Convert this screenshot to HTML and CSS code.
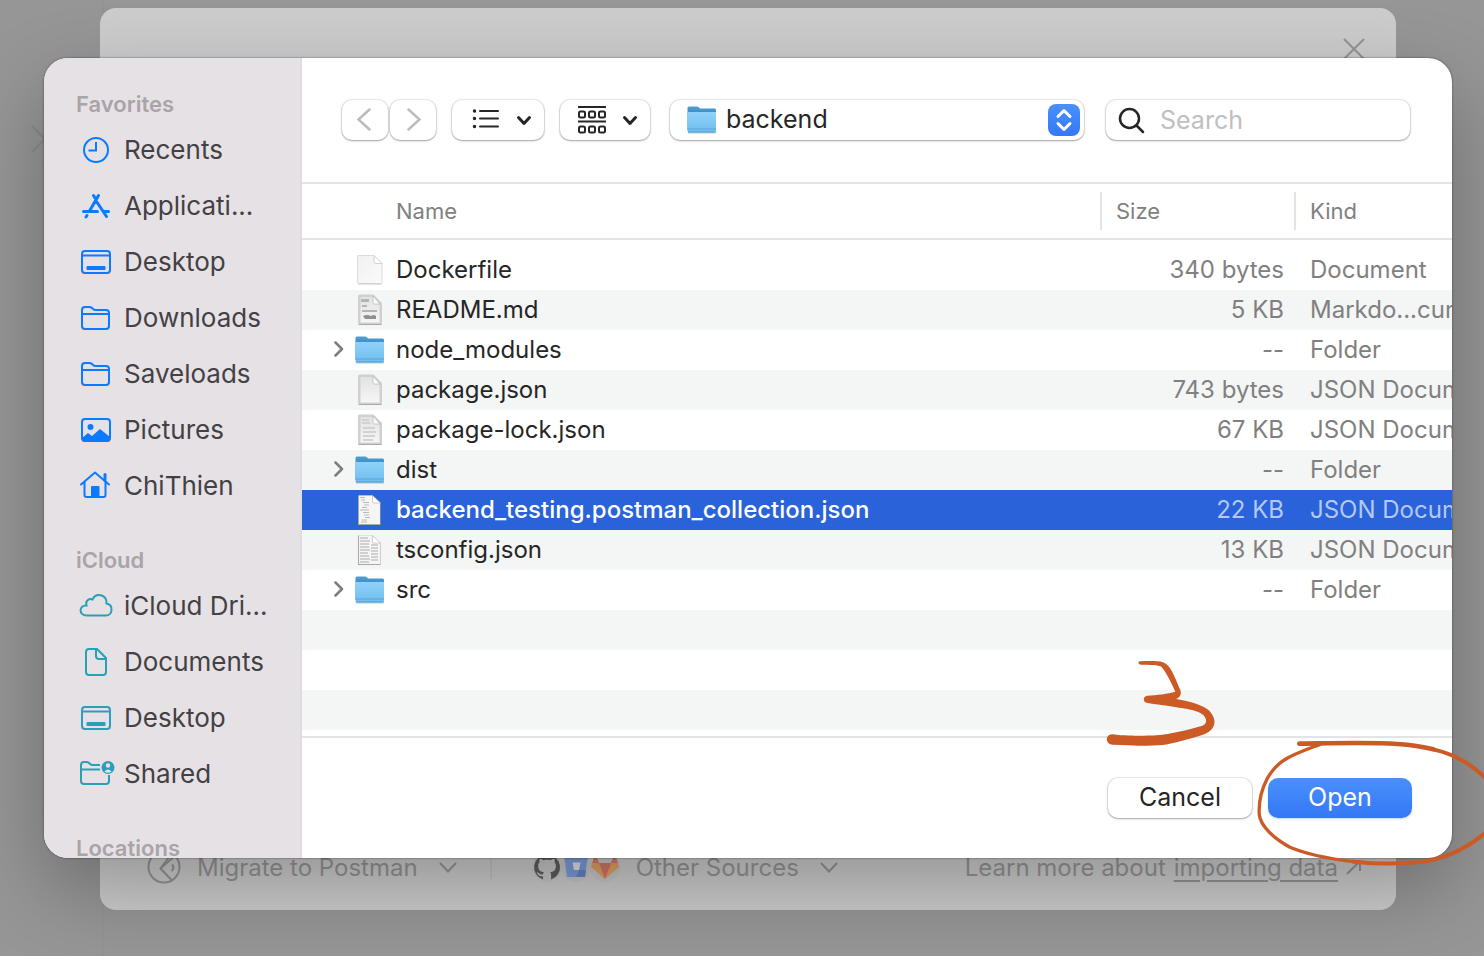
FILE: index.html
```html
<!DOCTYPE html>
<html lang="en">
<head>
<meta charset="utf-8">
<meta name="viewport" content="width=device-width, initial-scale=1">
<title>Open file</title>
<link rel="stylesheet" href="styles.css">
</head>
<body>
<svg class="defs" width="0" height="0" aria-hidden="true">
  <defs>
    <linearGradient id="folder-front" x1="0" y1="0" x2="0" y2="1"><stop offset="0" stop-color="#8fd2fa"/><stop offset="1" stop-color="#70bdee"/></linearGradient>
    <linearGradient id="folder-back" x1="0" y1="0" x2="0" y2="1"><stop offset="0" stop-color="#4f9fd2"/><stop offset=".4" stop-color="#3585c2"/></linearGradient>
    <linearGradient id="paper" x1="0" y1="0" x2="1" y2="1"><stop offset="0" stop-color="#f1f1f1"/><stop offset="1" stop-color="#fafafa"/></linearGradient>
    <linearGradient id="paper-grey" x1="0" y1="0" x2="0" y2="1"><stop offset="0" stop-color="#e2e2e2"/><stop offset="1" stop-color="#f6f6f6"/></linearGradient>
    <symbol id="folder" viewBox="0 0 32 30">
      <path d="M2 27.500h28v1H2z" fill="#000" opacity=".22"/>
      <path d="M1.500 3Q1.500 1.500 3 1.500h8q1 0 2 1l1 1h14.500Q30 3.500 30 5v20H1.500z" fill="url(#folder-back)"/>
      <path d="M1.500 7h28.500v19q0 1.500-1.500 1.500H3q-1.500 0-1.500-1.500z" fill="url(#folder-front)"/>
      <path d="M1.500 24h28.500" stroke="#57a5d8" stroke-width="1"/>
      <path d="M2 27h27.500" stroke="#4b9bd0" stroke-width="1"/>
    </symbol>
    <symbol id="doc" viewBox="0 0 32 32">
      <path d="M3.500 2.500Q3.500 1.500 4.500 1.500h15L28 9.500v18.500q0 1.500-1.500 1.500H5q-1.500 0-1.500-1.500z" fill="url(#paper)" stroke="#dcdcdc"/>
      <path d="M20 1.500v6q0 2 2 2h6z" fill="#fff" stroke="#d2d2d2"/>
      <path d="M4 30h23.500" stroke="#c9c9c9"/>
    </symbol>
    <symbol id="doc-thumb" viewBox="0 0 32 32">
      <path d="M4 2Q4 .5 5.500 .5h14L28 9v20.500q0 1.500-1.500 1.500H5.500Q4 31 4 29.500z" fill="#d0d0d0"/>
      <path d="M6.500 3h12.500l6.500 7.500v18H6.500z" fill="url(#paper-grey)"/>
      <path d="M19 2v6.500q0 1.500 1.500 1.500H26z" fill="#fafafa" stroke="#bdbdbd" stroke-width=".8"/>
      <path d="M5 30.500h22.500" stroke="#aaa"/>
    </symbol>
    <symbol id="doc-code" viewBox="0 0 32 32">
      <path d="M4 1.500h14.500L26.500 9v22H4z" fill="#a8a8a8"/>
      <path d="M5 1.500h13l8 7.500v21H5z" fill="#f5f5f5"/>
      <path d="M18.500 1.500V8q0 1 1 1h7z" fill="#fff" stroke="#bdbdbd" stroke-width=".7"/>
    </symbol>
    <symbol id="chev-down" viewBox="0 0 16 16"><path d="M2.500 5.500 8 11.500l5.500-6" fill="none" stroke="currentColor" stroke-width="3" stroke-linecap="round" stroke-linejoin="round"/></symbol>
    <symbol id="chev-thin" viewBox="0 0 20 20"><path d="M2 6l8 8.500L18 6" fill="none" stroke="currentColor" stroke-width="2"/></symbol>
    <symbol id="disclosure" viewBox="1 0 10 18"><path d="M2.500 2.500 9 9l-6.500 6.500" fill="none" stroke="#7d7d7d" stroke-width="2.500" stroke-linecap="round" stroke-linejoin="round"/></symbol>
    <symbol id="side-desktop" viewBox="0 0 36 32"><g fill="none" stroke="currentColor" stroke-width="2"><rect x="4" y="5" width="28" height="22" rx="3"/><path d="M4 9.500h28"/></g><rect x="8.500" y="20" width="19" height="4" rx="1" fill="currentColor"/></symbol>
    <symbol id="side-folder" viewBox="0 0 36 32"><path d="M4 24V8q0-3 3-3h4q2 0 3 1l1 1q1 1 3 1h10q3 0 3 3v13q0 3-3 3H7q-3 0-3-3zM4 12h27" fill="none" stroke="currentColor" stroke-width="2"/></symbol>
  </defs>
</svg>

<div class="stage">
  <div class="page-rule"></div>
  <svg class="page-chevron" width="16" height="28" viewBox="0 0 16 28" aria-hidden="true"><path d="M1 1l13 13L1 27" fill="none" stroke="currentColor" stroke-width="2"/></svg>

  <section class="import-modal" aria-label="Import">
    <button class="close" type="button" aria-label="Close">
      <svg width="24" height="24" viewBox="0 0 24 24" aria-hidden="true"><path d="M2 2l20 20M22 2L2 22" stroke="currentColor" stroke-width="2"/></svg>
    </button>
    <div class="import-footer">
      <button class="source" type="button">
        <svg width="34" height="34" viewBox="0 0 34 34" fill="none" stroke="currentColor" stroke-width="2" aria-hidden="true"><circle cx="17" cy="17" r="15.500"/><path d="M26 7.500L13.500 18.500l11 11.500"/><path d="M13.500 18.500L22 7"/><path d="M25 14.500q3 3.500-.5 6.500"/></svg>
        <span>Migrate to Postman</span>
        <svg width="20" height="20" aria-hidden="true"><use href="#chev-thin"/></svg>
      </button>
      <span class="divider"></span>
      <button class="source" type="button">
        <span class="logos">
          <svg width="30" height="30" viewBox="0 0 30 30" aria-hidden="true"><circle cx="15" cy="15" r="15" fill="#c6c6c6"/><path fill="#5e5e5e" d="M15 2.500a12.800 12.800 0 0 0-4 25v-3.300c-4 .8-4.500-2.200-5.800-2.800-.8-.5-.7-1 .3-1 1.800 0 2.400 3 5.500 1.800.1-1 .5-1.600 1-2-3.200-.4-5.800-1.800-5.800-6.300 0-1.600.5-2.600 1.400-3.600-.3-1-.3-2.300.2-3.500 1.500 0 2.700.8 3.800 1.500 2.200-.6 4.700-.6 6.900 0 1-.7 2.200-1.400 3.800-1.500.5 1.200.5 2.500.2 3.500.9 1 1.400 2 1.400 3.600 0 4.500-2.600 5.900-5.800 6.300.6.500 1 1.400 1 2.800v4.500a12.800 12.800 0 0 0-4.100-25z"/></svg>
          <svg width="30" height="30" viewBox="0 0 30 30" aria-hidden="true"><circle cx="15" cy="15" r="15" fill="#c6c6c6"/><path d="M3 3h24l-3 22H6z" fill="#7c9cda"/><path d="M11.500 10.500h8l-1.500 7.500h-5z" fill="#dfe2e8"/><path d="M18 18h7l-1 7h-9z" fill="#6984c4"/></svg>
          <svg width="30" height="30" viewBox="0 0 30 30" aria-hidden="true"><circle cx="15" cy="15" r="15" fill="#c6c6c6"/><path d="M5 1l4 10h12l4-10 4 14-14 12L1 15z" fill="#e2a064"/><path d="M5 1l4 10H2.500zM25 1l-4 10h6.500zM9 11h12l-6 16z" fill="#d0776a"/></svg>
        </span>
        <span>Other Sources</span>
        <svg width="20" height="20" aria-hidden="true"><use href="#chev-thin"/></svg>
      </button>
      <p class="learn">Learn more about <a href="#import">importing data</a>
        <svg width="16" height="16" viewBox="0 0 16 16" fill="none" stroke="currentColor" stroke-width="2" aria-hidden="true"><path d="M1 15L14 2M4 2h10v10"/></svg>
      </p>
    </div>
  </section>

  <section class="dialog" role="dialog" aria-label="Open">
    <nav class="sidebar" aria-label="Locations">
      <h2>Favorites</h2>
      <ul>
        <li><a href="#recents"><svg viewBox="0 0 36 32" fill="none" stroke="currentColor" stroke-width="2" aria-hidden="true"><circle cx="18" cy="16" r="12"/><path d="M18 8v8.500h-7.500"/></svg>Recents</a></li>
        <li><a href="#applications"><svg viewBox="0 0 36 32" fill="none" stroke="currentColor" stroke-width="3" stroke-linecap="round" aria-hidden="true"><path d="M15.500 5.500l1.500 2.500M20.500 5.500L11.500 21M18.500 11.500l10 15M5.500 21.500h14M25.500 21.500h5M9 25.500l-1 1.500"/></svg>Applicati...</a></li>
        <li><a href="#desktop"><svg aria-hidden="true"><use href="#side-desktop"/></svg>Desktop</a></li>
        <li><a href="#downloads"><svg aria-hidden="true"><use href="#side-folder"/></svg>Downloads</a></li>
        <li><a href="#saveloads"><svg aria-hidden="true"><use href="#side-folder"/></svg>Saveloads</a></li>
        <li><a href="#pictures"><svg viewBox="0 0 36 32" aria-hidden="true"><rect x="4" y="5" width="28" height="22" rx="3" fill="none" stroke="currentColor" stroke-width="2"/><circle cx="12.500" cy="13" r="3" fill="currentColor"/><path d="M4 24l6-5 4 3 8-7 10 8v2q0 3-3 3H7q-3 0-3-3z" fill="currentColor"/></svg>Pictures</a></li>
        <li><a href="#home"><svg viewBox="0 0 36 32" fill="none" stroke="currentColor" stroke-width="2" stroke-linecap="round" stroke-linejoin="round" aria-hidden="true"><path d="M3 14.500L17 2.500l14 12M6.500 12v13q0 2 2 2h17q2 0 2-2V12"/><path d="M27 4.500v6" stroke-width="3"/><path d="M14 17h6.500v9.500H14z" fill="currentColor"/></svg>ChiThien</a></li>
      </ul>
      <h2>iCloud</h2>
      <ul class="cloud">
        <li><a href="#drive"><svg viewBox="0 0 36 32" fill="none" stroke="currentColor" stroke-width="2" aria-hidden="true"><path d="M9 25.500C0 25.500 1 15 8.500 15.500 7 11 11 8 14.500 9.500 18 2 29 4.500 28.500 13.500 36 15 34.500 25.500 28 25.500z"/></svg>iCloud Dri...</a></li>
        <li><a href="#documents"><svg viewBox="0 0 36 32" fill="none" stroke="currentColor" stroke-width="2" aria-hidden="true"><path d="M8 26V6q0-3 3-3h8l9 9v14q0 3-3 3H11q-3 0-3-3zM18 3.500V10q0 3 3 3h6.500"/></svg>Documents</a></li>
        <li><a href="#icloud-desktop"><svg aria-hidden="true"><use href="#side-desktop"/></svg>Desktop</a></li>
        <li><a href="#shared"><svg viewBox="0 0 36 32" fill="none" stroke="currentColor" stroke-width="2" aria-hidden="true"><path d="M22 7h-7q-2 0-3-1l-1-1q-1-1-2.500-1H6Q3 4 3 7v16q0 3 3 3h22q3 0 3-3v-6M3 11.500h19"/><circle cx="30" cy="9.500" r="6.500" fill="currentColor" stroke="none"/><circle cx="30" cy="7.500" r="2.200" fill="#e6e1e5" stroke="none"/><path d="M26.500 13.500q3.500-4 7 0-3.500 2.500-7 0z" fill="#e6e1e5" stroke="none"/></svg>Shared</a></li>
      </ul>
      <h2>Locations</h2>
    </nav>

    <div class="main">
      <div class="toolbar">
        <div class="history">
          <button class="btn" type="button" aria-label="Back"><svg width="16" height="24" viewBox="0 0 16 24" aria-hidden="true"><path d="M12.500 1.500L1.500 11.500l11 10" fill="none" stroke="#bcbcbc" stroke-width="2.500" stroke-linecap="round"/></svg></button>
          <button class="btn" type="button" aria-label="Forward"><svg width="16" height="24" viewBox="0 0 16 24" aria-hidden="true"><path d="M3.500 1.500l11 10-11 10" fill="none" stroke="#bcbcbc" stroke-width="2.500" stroke-linecap="round"/></svg></button>
        </div>
        <button class="btn view" type="button" aria-label="List view">
          <svg width="28" height="30" viewBox="0 0 28 30" stroke="#262626" stroke-width="2" stroke-linecap="round" aria-hidden="true"><path d="M8 6h18M8 13.500h18M8 21.500h18"/><path d="M2.500 6h.01M2.500 13.500h.01M2.500 21.500h.01" stroke-width="3.500"/></svg>
          <svg width="16" height="16" aria-hidden="true"><use href="#chev-down"/></svg>
        </button>
        <button class="btn view group" type="button" aria-label="Group items">
          <svg width="28" height="30" viewBox="0 0 28 30" fill="none" stroke="#262626" stroke-width="2" aria-hidden="true"><path d="M0 2h28M0 16.500h28"/><rect x="1" y="6.500" width="6" height="6" rx="1.500"/><rect x="11" y="6.500" width="6" height="6" rx="1.500"/><rect x="21" y="6.500" width="6" height="6" rx="1.500"/><rect x="1" y="21.500" width="6" height="6" rx="1.500"/><rect x="11" y="21.500" width="6" height="6" rx="1.500"/><rect x="21" y="21.500" width="6" height="6" rx="1.500"/></svg>
          <svg width="16" height="16" aria-hidden="true"><use href="#chev-down"/></svg>
        </button>
        <div class="btn location">
          <svg width="32" height="30" aria-hidden="true"><use href="#folder"/></svg>
          <select aria-label="Current folder"><option>backend</option></select>
          <svg width="32" height="32" viewBox="0 0 32 32" class="stepper" aria-hidden="true"><path d="M10 12.500l6-6 6 6M10 19.500l6 6 6-6" fill="none" stroke="#fff" stroke-width="3" stroke-linecap="round" stroke-linejoin="round"/></svg>
        </div>
        <label class="btn search">
          <svg width="28" height="28" viewBox="0 0 28 28" fill="none" stroke="#262626" stroke-width="2.500" stroke-linecap="round" aria-hidden="true"><circle cx="11.500" cy="12.500" r="9.500"/><path d="M18.500 19.500l6.500 6.500"/></svg>
          <input type="search" placeholder="Search" aria-label="Search">
        </label>
      </div>

      <div class="listing">
        <table>
          <colgroup><col><col class="col-size"><col class="col-kind"></colgroup>
          <thead><tr><th scope="col">Name</th><th scope="col"><span>Size</span></th><th scope="col"><span>Kind</span></th></tr></thead>
          <tbody>
            <tr><td><div class="file"><i></i><svg aria-hidden="true"><use href="#doc"/></svg>Dockerfile</div></td><td>340 bytes</td><td>Document</td></tr>
            <tr><td><div class="file"><i></i><svg viewBox="0 0 32 32" aria-hidden="true"><use href="#doc-thumb"/><path d="M7 5h8v3H7zM8 11h5v2H8zM8 16h15v2H8z" fill="#b4b4b4"/><path d="M9 22q4-2 8 0 3-2 5 0v3H11z" fill="#8f8f8f"/></svg>README.md</div></td><td>5 KB</td><td>Markdo...cument</td></tr>
            <tr><td><div class="file"><i><svg aria-hidden="true"><use href="#disclosure"/></svg></i><svg aria-hidden="true"><use href="#folder"/></svg>node_modules</div></td><td>--</td><td>Folder</td></tr>
            <tr><td><div class="file"><i></i><svg aria-hidden="true"><use href="#doc-thumb"/></svg>package.json</div></td><td>743 bytes</td><td>JSON Document</td></tr>
            <tr><td><div class="file"><i></i><svg viewBox="0 0 32 32" aria-hidden="true"><use href="#doc-thumb"/><path d="M8 6h7M8 9h8M9 14h12M9 18h13M9 22h12M9 26h10" stroke="#d2d2d2" stroke-width="2"/></svg>package-lock.json</div></td><td>67 KB</td><td>JSON Document</td></tr>
            <tr><td><div class="file"><i><svg aria-hidden="true"><use href="#disclosure"/></svg></i><svg aria-hidden="true"><use href="#folder"/></svg>dist</div></td><td>--</td><td>Folder</td></tr>
            <tr class="selected"><td><div class="file"><i></i><svg viewBox="0 0 32 32" aria-hidden="true"><use href="#doc-code"/><path d="M6 3.500h5M7 6h4M9 8.500h6M10 11h5M8 13.500h5M6 16h9M9 18.500h6M10 21h5M11 23.500h5M8 26h5M7 28h6" stroke="#b4b4b4" stroke-width=".9"/></svg>backend_testing.postman_collection.json</div></td><td>22 KB</td><td>JSON Document</td></tr>
            <tr><td><div class="file"><i></i><svg viewBox="0 0 32 32" aria-hidden="true"><use href="#doc-code"/><path d="M6 4h8M6 7h10M6 10h9M17 11h7M6 13h9M17 14h7M6 16h10M17 17h7M6 19h8M17 20h7M6 22h9M17 23h7M6 25h10M17 26h7M6 28h9" stroke="#ababab" stroke-width="1.200"/></svg>tsconfig.json</div></td><td>13 KB</td><td>JSON Document</td></tr>
            <tr><td><div class="file"><i><svg aria-hidden="true"><use href="#disclosure"/></svg></i><svg aria-hidden="true"><use href="#folder"/></svg>src</div></td><td>--</td><td>Folder</td></tr>
            <tr><td></td><td></td><td></td></tr>
            <tr><td></td><td></td><td></td></tr>
            <tr><td></td><td></td><td></td></tr>
          </tbody>
        </table>
      </div>

      <div class="actions">
        <button class="btn action" type="button">Cancel</button>
        <button class="btn action primary" type="button">Open</button>
      </div>
    </div>
  </section>

  <svg class="ink" width="394" height="260" viewBox="0 0 1182 780" aria-hidden="true">
    <path fill="#cb5a24" d="M150 64C180 62 205 63 217 66C240 73 250 100 272 153C274 165 268 173 258 177C290 183 325 190 350 206C368 218 376 238 373 252C368 270 355 280 330 287C290 298 240 314 205 316C160 319 110 315 68 314C46 314 44 284 66 283C100 288 160 288 200 286C240 283 300 268 335 258C352 252 352 238 340 225C320 208 280 205 172 189C158 187 158 168 172 167C200 165 235 162 256 155C245 130 228 95 214 80C205 74 180 75 152 74C143 72 144 65 150 64Z"/>
    <g fill="none" stroke="#cb5a24" stroke-linecap="round" stroke-linejoin="round">
      <path stroke-width="14" d="M628 311C700 310 740 309 800 309C890 309 960 311 1030 328"/>
      <path stroke-width="12" d="M1030 328C1105 346 1145 375 1190 417"/>
      <path stroke-width="12" d="M1190 576C1140 618 1080 648 1025 661C940 675 850 671 790 665"/>
      <path stroke-width="10" d="M790 665C710 656 650 643 600 622C545 592 512 555 508 525C505 485 514 450 532 415C565 357 605 346 690 313"/>
    </g>
  </svg>
</div>
</body>
</html>
```
FILE: styles.css
```css
* { box-sizing: border-box; }

body {
  margin: 0;
  font-family: Inter, "Liberation Sans", sans-serif;
  font-size: 24px;
  color: #262626;
  background: #969696;
}

button, input, select { font: inherit; color: inherit; }
button { border: 0; background: none; padding: 0; }
svg { display: block; flex: none; }
.defs { position: absolute; }

.stage {
  position: relative;
  display: grid;
  min-height: 100vh;
  overflow: hidden;
}

.page-rule {
  position: absolute;
  top: 0;
  bottom: 0;
  left: 102px;
  width: 2px;
  background: #939393;
}

.page-chevron {
  position: absolute;
  top: 125px;
  left: 31px;
  color: #8a8a8a;
}

/* Import window behind the file dialog */
.import-modal {
  grid-area: 1 / 1;
  z-index: 1;
  display: flex;
  flex-direction: column;
  justify-content: space-between;
  margin: 8px 88px 46px 100px;
  border-radius: 16px;
  background: #cccccc;
  color: #949494;
}

.close {
  align-self: flex-end;
  margin: 29px 30px 0 0;
}

.import-footer {
  display: flex;
  align-items: center;
  height: 84px;
  padding: 0 34px 2px 47px;
  white-space: nowrap;
}

.source {
  display: flex;
  align-items: center;
  gap: 16px;
}
.source > svg:last-child { margin-left: 4px; }

.divider {
  width: 2px;
  height: 24px;
  margin: 0 40px 0 32px;
  background: #c2c2c2;
}

.logos { display: flex; }
.logos svg + svg { margin-left: -1px; }

.learn {
  display: flex;
  align-items: center;
  gap: 8px;
  margin: 0 0 0 auto;
}
.learn a {
  color: inherit;
  text-decoration-thickness: 2px;
  text-underline-offset: 4px;
}

/* File dialog */
.dialog {
  grid-area: 1 / 1;
  z-index: 2;
  display: grid;
  grid-template-columns: 258px minmax(0, 1fr);
  margin: 58px 32px 98px 44px;
  border-radius: 24px;
  overflow: hidden;
  background: #ffffff;
  box-shadow: 0 0 2px rgba(0, 0, 0, .6), 0 30px 80px rgba(0, 0, 0, .28);
}

.sidebar {
  contain: size;
  overflow: hidden;
  padding-top: 28px;
  border-right: 2px solid #dfdbde;
  background: #e6e1e5;
}
.sidebar h2 {
  margin: 0;
  padding-left: 32px;
  font-size: 22px;
  font-weight: 600;
  line-height: 36px;
  color: #a9a4a8;
}
.sidebar ul {
  margin: 0 0 28px;
  padding: 0;
  list-style: none;
  color: #0a7aff;
}
.sidebar li a {
  display: flex;
  align-items: center;
  gap: 10px;
  height: 56px;
  padding: 0 0 2px 34px;
  font-size: 26px;
  color: #434144;
  text-decoration: none;
}
.sidebar li svg {
  width: 36px;
  height: 32px;
  margin-top: 2px;
  overflow: visible;
  color: #0a7aff;
}
.sidebar .cloud svg { color: #2a9fb8; }

.main {
  display: flex;
  flex-direction: column;
}

.toolbar {
  display: flex;
  gap: 16px;
  padding: 42px 42px 42px 40px;
}
.btn {
  height: 40px;
  border-radius: 10px;
  background: #ffffff;
  box-shadow: 0 0 1px 1px rgba(0, 0, 0, .09), 0 1px 2px rgba(0, 0, 0, .3);
}
.history {
  display: flex;
  gap: 2px;
}
.history .btn {
  display: grid;
  place-items: center;
  width: 46px;
}
.view {
  display: flex;
  align-items: center;
  justify-content: space-between;
  width: 92px;
  padding: 0 12px 0 20px;
}
.group {
  width: 90px;
  padding-left: 18px;
}
.location {
  display: flex;
  flex: 1;
  align-items: center;
  margin: 0 6px 0 4px;
  padding: 0 4px 0 16px;
}
.location select {
  flex: 1;
  min-width: 0;
  padding: 0 8px 2px;
  border: 0;
  appearance: none;
  background: none;
  font-size: 25px;
}
.stepper {
  border-radius: 8px;
  background: linear-gradient(#4a90fa, #3478f6);
}
.search {
  display: flex;
  align-items: center;
  gap: 14px;
  width: 304px;
  padding: 0 12px;
}
.search input {
  flex: 1;
  min-width: 0;
  padding: 0;
  border: 0;
  outline: 0;
  background: none;
  font-size: 25px;
}
.search input::placeholder { color: #c0c0c0; }

.listing {
  flex: 1;
  padding-bottom: 6px;
  border-top: 2px solid #e4e4e4;
  border-bottom: 2px solid #e4e4e4;
}
table {
  width: 100%;
  table-layout: fixed;
  border-collapse: separate;
  border-spacing: 0;
}
.col-size { width: 194px; }
.col-kind { width: 158px; }
th {
  height: 56px;
  padding: 0;
  border-bottom: 2px solid #e4e4e4;
  font-size: 22px;
  font-weight: 400;
  text-align: left;
  color: #808080;
}
th:first-child { padding-left: 94px; }
th span {
  display: block;
  padding-left: 14px;
  border-left: 2px solid #e4e4e4;
  line-height: 38px;
}
tbody::before {
  content: "";
  display: table-row;
  height: 10px;
}
td {
  height: 40px;
  padding: 0 0 2px;
  overflow: hidden;
  white-space: nowrap;
  color: #808080;
}
td:first-child { color: #262626; }
td:nth-child(2) {
  padding-right: 10px;
  text-align: right;
}
td:nth-child(3) { padding-left: 16px; }
tbody tr:nth-child(even) td { background: #f4f5f5; }
tbody tr.selected td {
  background: #2962d9;
  color: #b4c8f3;
}
tbody tr.selected td:first-child {
  font-weight: 500;
  color: #ffffff;
}
.file {
  display: flex;
  align-items: center;
  gap: 10px;
  padding-left: 32px;
}
.file > svg {
  width: 32px;
  height: 32px;
  margin-top: 2px;
}
.file i, .file i svg {
  width: 10px;
  height: 18px;
}

.actions {
  display: flex;
  justify-content: flex-end;
  gap: 16px;
  padding: 40px;
}
.action {
  width: 144px;
  padding-bottom: 2px;
  font-size: 25px;
}
.primary {
  color: #ffffff;
  background: linear-gradient(#4a90fa, #3478f6);
  box-shadow: 0 1px 2px rgba(52, 120, 246, .3);
}

/* Hand-drawn marks over the dialog */
.ink {
  grid-area: 1 / 1;
  z-index: 3;
  justify-self: end;
  margin-top: 640px;
  pointer-events: none;
}
```
